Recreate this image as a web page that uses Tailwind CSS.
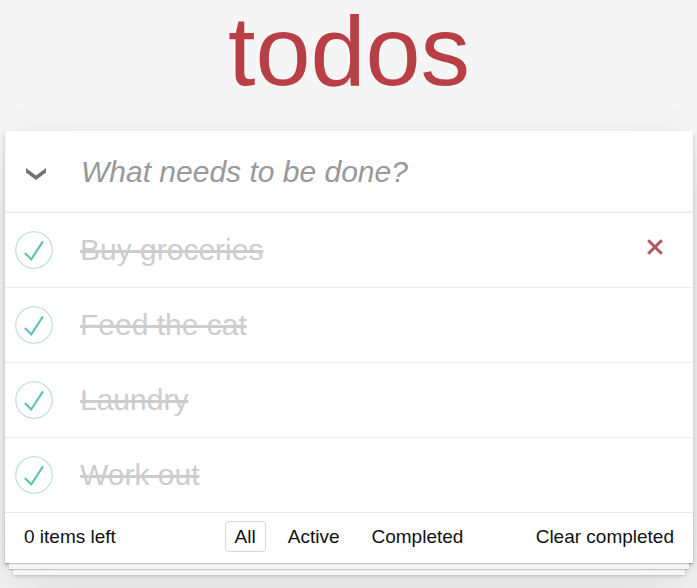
<!DOCTYPE html>
<html lang="en">
<head>
<meta charset="utf-8">
<meta name="viewport" content="width=device-width, initial-scale=1">
<title>todos</title>
<script src="https://cdn.jsdelivr.net/npm/@tailwindcss/browser@4"></script>
</head>
<body class="min-h-screen overflow-x-hidden bg-[#f5f5f5] pr-1 pl-[5px] font-['Liberation_Sans',Arial,sans-serif] text-[#111]">
<svg class="hidden" aria-hidden="true">
  <symbol id="checked" viewBox="-2 -2 104 104">
    <circle cx="50" cy="50" r="50" fill="none" stroke="#bddad5" stroke-width="3"/>
    <path fill="#5dc2af" d="M72 25L42 71 27 56l-4 4 20 20 34-52z"/>
  </symbol>
</svg>
<header>
  <h1 class="pb-[29px] text-center text-[99px] leading-[102px] text-[#b83f45]">todos</h1>
</header>
<main class="bg-white shadow-[0_3px_5px_rgba(0,0,0,0.2),0_31px_63px_rgba(0,0,0,0.1)]">
  <div class="flex h-[82px] items-center border-b border-[#e6e6e6] bg-[#fefefe] shadow-[inset_0_-2px_2px_rgba(0,0,0,0.03)]">
    <button type="button" aria-label="Mark all as complete" class="flex w-[61px] shrink-0 justify-center self-stretch pt-[37px]">
      <svg class="h-3 w-5" viewBox="0 0 20 12" fill="#737373" aria-hidden="true"><path d="M0 0L10 7.5 20 0V4.5L10 12 0 4.5z"/></svg>
    </button>
    <input type="text" aria-label="New todo" placeholder="What needs to be done?" class="h-full min-w-0 flex-1 bg-transparent pl-[15px] text-[30px] outline-none placeholder:text-[#999] placeholder:italic">
  </div>
  <ul class="divide-y divide-[#ededed] text-[30px] text-[#cdcdcd]">
    <li class="flex h-[75px] items-center pr-[18px] pl-[10px]">
      <span class="grid size-[38px] shrink-0">
        <input id="todo-1" type="checkbox" checked class="col-start-1 row-start-1 size-full appearance-none">
        <svg class="pointer-events-none col-start-1 row-start-1 size-full" aria-hidden="true"><use href="#checked"/></svg>
      </span>
      <label for="todo-1" class="ml-[27px] flex-1 pb-px"><span class="line-through decoration-3">Buy groceries</span></label>
      <button type="button" aria-label="Delete Buy groceries" class="grid size-10 place-items-center pb-[6px] text-[#af5b5e]">
        <svg class="size-4" viewBox="0 0 16 16" fill="none" stroke="currentColor" stroke-width="3" aria-hidden="true"><path d="M1.2 1.2L14.8 14.8M14.8 1.2L1.2 14.8"/></svg>
      </button>
    </li>
    <li class="flex h-[75px] items-center pr-[18px] pl-[10px]">
      <span class="grid size-[38px] shrink-0">
        <input id="todo-2" type="checkbox" checked class="col-start-1 row-start-1 size-full appearance-none">
        <svg class="pointer-events-none col-start-1 row-start-1 size-full" aria-hidden="true"><use href="#checked"/></svg>
      </span>
      <label for="todo-2" class="ml-[27px] flex-1 pb-px"><span class="line-through decoration-3">Feed the cat</span></label>
    </li>
    <li class="flex h-[75px] items-center pr-[18px] pl-[10px]">
      <span class="grid size-[38px] shrink-0">
        <input id="todo-3" type="checkbox" checked class="col-start-1 row-start-1 size-full appearance-none">
        <svg class="pointer-events-none col-start-1 row-start-1 size-full" aria-hidden="true"><use href="#checked"/></svg>
      </span>
      <label for="todo-3" class="ml-[27px] flex-1 pb-px"><span class="line-through decoration-3">Laundry</span></label>
    </li>
    <li class="flex h-[74px] items-center pr-[18px] pl-[10px]">
      <span class="grid size-[38px] shrink-0">
        <input id="todo-4" type="checkbox" checked class="col-start-1 row-start-1 size-full appearance-none">
        <svg class="pointer-events-none col-start-1 row-start-1 size-full" aria-hidden="true"><use href="#checked"/></svg>
      </span>
      <label for="todo-4" class="ml-[27px] flex-1 pb-px"><span class="line-through decoration-3">Work out</span></label>
    </li>
  </ul>
  <footer class="grid h-[51px] grid-cols-[1fr_auto_1fr] items-center border-t border-[#e6e6e6] px-[19px] pb-[3px] text-[19px] leading-[29px] shadow-[0_1px_1px_rgba(0,0,0,0.2),0_10px_0_-4px_#f6f6f6,0_11px_1px_-4px_rgba(0,0,0,0.2),0_20px_0_-8px_#f6f6f6,0_21px_3px_-8px_rgba(0,0,0,0.2)]">
    <span>0 items left</span>
    <nav aria-label="Filter" class="flex gap-3">
      <a href="#/" class="rounded-[4px] border border-[#ecd0d1] px-[9px]">All</a>
      <a href="#/active" class="rounded-[4px] border border-transparent px-[9px]">Active</a>
      <a href="#/completed" class="rounded-[4px] border border-transparent px-[9px]">Completed</a>
    </nav>
    <button type="button" class="justify-self-end whitespace-nowrap">Clear completed</button>
  </footer>
</main>
</body>
</html>
